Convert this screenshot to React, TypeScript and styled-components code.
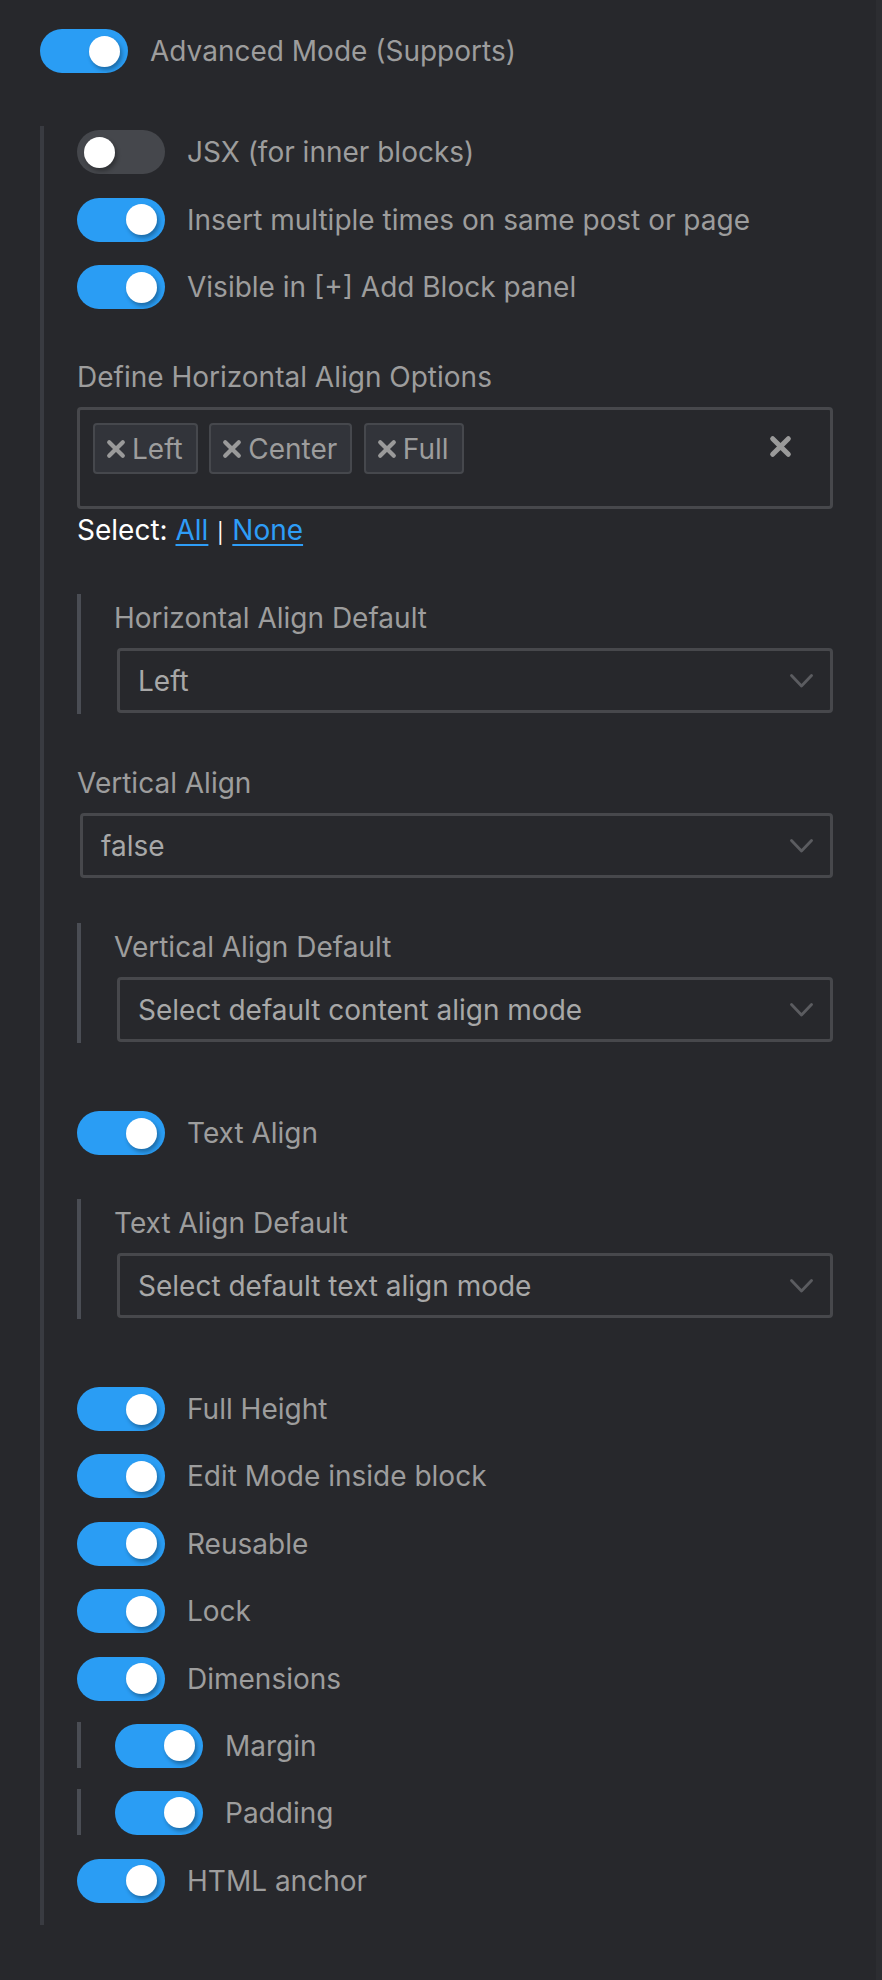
import React from "react";
import styled, { createGlobalStyle } from "styled-components";

const GlobalStyle = createGlobalStyle`
  html, body {
    margin: 0;
    padding: 0;
    background: #27282c;
  }
  body {
    font-family: Inter, "Noto Sans", "Liberation Sans", sans-serif;
    -webkit-font-smoothing: antialiased;
  }
  *, *::before, *::after {
    box-sizing: border-box;
  }
`;

const Page = styled.div`
  width: 882px;
  min-height: 1980px;
  padding: 29px 43px 0 40px;
  border-right: 6px solid #2c2d31;
  background: #27282c;
`;

const Row = styled.div<{ $mt?: number }>`
  display: flex;
  align-items: center;
  gap: 22px;
  height: 44px;
  margin-top: ${(p) => p.$mt ?? 0}px;
`;

const SubRow = styled.div<{ $mt?: number }>`
  display: flex;
  align-items: center;
  gap: 22px;
  margin-top: ${(p) => p.$mt ?? 0}px;
  border-left: 4px solid #4a4d54;
  padding: 1.5px 0 0 34px;
`;

const Track = styled.div<{ $on: boolean }>`
  flex: none;
  width: 88px;
  height: 44px;
  border-radius: 22px;
  background: ${(p) => (p.$on ? "#2a9df4" : "#45474c")};
  display: flex;
  align-items: center;
  justify-content: ${(p) => (p.$on ? "flex-end" : "flex-start")};
  padding: 0 8px 0 7px;
`;

const Knob = styled.span`
  width: 31px;
  height: 31px;
  border-radius: 50%;
  background: #ffffff;
  box-shadow: 2px 3px 4px rgba(0, 0, 0, 0.32);
`;

const RowLabel = styled.span`
  font-size: 28px;
  line-height: 34px;
  color: #9d9d9d;
  white-space: nowrap;
`;

const Nested = styled.div`
  margin-top: 53px;
  border-left: 4px solid #393b41;
  padding: 4px 0 22px 33px;
`;

const FieldLabel = styled.div<{ $mt?: number }>`
  font-size: 28px;
  line-height: 34px;
  color: #9d9d9d;
  margin-top: ${(p) => p.$mt ?? 0}px;
`;

const TagBox = styled.div`
  margin-top: 13px;
  min-height: 102px;
  border: 3px solid #47484c;
  border-radius: 4px;
  padding: 13px;
  display: flex;
  align-items: flex-start;
`;

const TagList = styled.div`
  flex: 1;
  display: flex;
  flex-wrap: wrap;
  gap: 11.5px;
`;

const Tag = styled.div`
  height: 51px;
  border: 2px solid #46484d;
  border-radius: 4px;
  background: #32343a;
  padding: 0 13px 0 11px;
  display: flex;
  align-items: center;
  gap: 6px;
  font-size: 28px;
  color: #9d9d9d;
`;

const ClearButton = styled.div`
  height: 47px;
  display: flex;
  align-items: center;
  margin-right: 25px;
`;

const SelectLinks = styled.div`
  margin-top: 4px;
  height: 34px;
  font-size: 28px;
  line-height: 34px;
  color: #ffffff;
`;

const Separator = styled.span`
  font-size: 20px;
  line-height: 20px;
  margin: 0 3px;
`;

const Link = styled.a`
  color: #2e9df7;
  text-decoration: underline;
  text-decoration-thickness: 2px;
  text-underline-offset: 4px;
`;

const Section = styled.div<{ $mt?: number }>`
  margin-top: ${(p) => p.$mt ?? 0}px;
  border-left: 4px solid #4a4d54;
  padding: 7px 0 1px 33px;
`;

const SelectBox = styled.div<{ $mt?: number }>`
  margin-top: ${(p) => p.$mt ?? 0}px;
  margin-left: 3px;
  height: 65px;
  border: 3px solid #47484c;
  border-radius: 4px;
  padding: 0 17px 0 18px;
  display: flex;
  align-items: center;
  justify-content: space-between;
  font-size: 28px;
  color: #a8a8a8;
`;

const Chevron = () => (
  <svg width="23" height="14" viewBox="0 0 23 14" fill="none">
    <polyline
      points="1.5,1.5 11.5,12 21.5,1.5"
      stroke="#5b5c60"
      strokeWidth="2.8"
      strokeLinecap="round"
      strokeLinejoin="round"
    />
  </svg>
);

const XIcon = ({ size, color, w }: { size: number; color: string; w: number }) => (
  <svg width={size} height={size} viewBox="0 0 20 20" fill="none">
    <path
      d="M3.2 3.2 L16.8 16.8 M16.8 3.2 L3.2 16.8"
      stroke={color}
      strokeWidth={w}
      strokeLinecap="round"
    />
  </svg>
);

const Switch = ({ on }: { on: boolean }) => (
  <Track $on={on}>
    <Knob />
  </Track>
);

const ToggleRow = ({ on = true, label, mt }: { on?: boolean; label: string; mt?: number }) => (
  <Row $mt={mt}>
    <Switch on={on} />
    <RowLabel>{label}</RowLabel>
  </Row>
);

const Select = ({ value, mt }: { value: string; mt?: number }) => (
  <SelectBox $mt={mt}>
    <span>{value}</span>
    <Chevron />
  </SelectBox>
);

export default function App() {
  return (
    <>
      <GlobalStyle />
      <Page>
        <ToggleRow label="Advanced Mode (Supports)" />
        <Nested>
          <ToggleRow on={false} label="JSX (for inner blocks)" />
          <ToggleRow label="Insert multiple times on same post or page" mt={23.5} />
          <ToggleRow label="Visible in [+] Add Block panel" mt={23.5} />

          <FieldLabel $mt={51}>Define Horizontal Align Options</FieldLabel>
          <TagBox>
            <TagList>
              {["Left", "Center", "Full"].map((t) => (
                <Tag key={t}>
                  <XIcon size={20} w={4.2} color="#9a9a9a" />
                  <span>{t}</span>
                </Tag>
              ))}
            </TagList>
            <ClearButton>
              <XIcon size={23} w={4.4} color="#9a9a9a" />
            </ClearButton>
          </TagBox>
          <SelectLinks>
            Select: <Link href="#">All</Link>
            <Separator> | </Separator>
            <Link href="#">None</Link>
          </SelectLinks>

          <Section $mt={47}>
            <FieldLabel>Horizontal Align Default</FieldLabel>
            <Select value="Left" mt={13} />
          </Section>

          <FieldLabel $mt={52}>Vertical Align</FieldLabel>
          <Select value="false" mt={13} />

          <Section $mt={45}>
            <FieldLabel>Vertical Align Default</FieldLabel>
            <Select value="Select default content align mode" mt={13} />
          </Section>

          <ToggleRow label="Text Align" mt={68} />

          <Section $mt={44}>
            <FieldLabel>Text Align Default</FieldLabel>
            <Select value="Select default text align mode" mt={13} />
          </Section>

          <ToggleRow label="Full Height" mt={68} />
          <ToggleRow label="Edit Mode inside block" mt={23.4} />
          <ToggleRow label="Reusable" mt={23.4} />
          <ToggleRow label="Lock" mt={23.4} />
          <ToggleRow label="Dimensions" mt={23.4} />
          <SubRow $mt={21.5}>
            <Switch on />
            <RowLabel>Margin</RowLabel>
          </SubRow>
          <SubRow $mt={21.5}>
            <Switch on />
            <RowLabel>Padding</RowLabel>
          </SubRow>
          <ToggleRow label="HTML anchor" mt={24.4} />
        </Nested>
      </Page>
    </>
  );
}
